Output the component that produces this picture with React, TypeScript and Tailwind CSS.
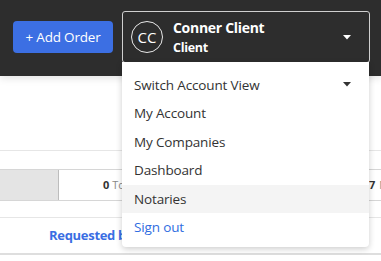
import React from 'react'

const menuItems = ['My Account', 'My Companies', 'Dashboard']

const Caret = () => (
  <svg width="8" height="5" viewBox="0 0 8 5" className="shrink-0">
    <path d="M0 0h8L4 4.5z" fill="currentColor" />
  </svg>
)

export default function App() {
  return (
    <div className="relative h-[261px] w-[381px] overflow-hidden bg-white font-['Open_Sans',sans-serif] text-[#333]">
      {/* top bar */}
      <header className="relative z-10 flex h-[76px] items-start gap-[9px] bg-[#2d2d2d] pl-[13px] shadow-[0_2px_8px_rgba(0,0,0,0.12)]">
        <button className="mt-[21px] h-[32px] w-[100px] rounded-[4px] bg-[#3c6fe3] text-[13.5px] tracking-[-0.2px] text-white">
          + Add Order
        </button>
        <div className="relative mt-[11px]">
          <div className="flex h-[52px] w-[248px] items-center rounded-[3px] border border-[#cfcfcf] pl-[8px] pr-[18px]">
            <div className="flex h-[32px] w-[32px] items-center justify-center rounded-full border border-[#e8e8e8] text-[15px] text-white">
              CC
            </div>
            <div className="ml-[10px] flex flex-1 flex-col pt-[1px]">
              <span className="text-[14px] font-bold leading-[20px] tracking-[-0.3px] text-white">Conner Client</span>
              <span className="text-[12.5px] font-bold leading-[20px] tracking-[-0.3px] text-white">Client</span>
            </div>
            <span className="text-white"><Caret /></span>
          </div>

          {/* account dropdown */}
          <div className="absolute left-0 top-[51px] w-[247px] rounded-b-[4px] bg-white pb-[5px] pt-[8.5px] text-[13.5px] tracking-[-0.15px] shadow-[0_2px_6px_rgba(0,0,0,0.2)]">
            <div className="flex h-[28.5px] items-center justify-between pl-[12px] pr-[18px]">
              Switch Account View
              <Caret />
            </div>
            {menuItems.map((t) => (
              <div key={t} className="flex h-[28.5px] items-center pl-[12px]">
                {t}
              </div>
            ))}
            <div className="flex h-[28.5px] items-center bg-[#f4f4f4] pl-[12px]">Notaries</div>
            <div className="flex h-[28.5px] items-center pl-[12px] text-[#2f6de1]">Sign out</div>
          </div>
        </div>
      </header>

      {/* page body behind menu */}
      <div className="mt-[74px] border-t border-[#e6e6e6]" />
      <div className="mt-[18px] flex h-[32px] border-y border-[#d6d6d6] text-[11px]">
        <div className="w-[59px] shrink-0 border-r border-[#bdbdbd] bg-[#e4e4e4]" />
        <div className="flex w-[310px] shrink-0 items-center pl-[44px]">
          <span className="font-bold text-[#333]">0</span>
          <span className="ml-[3px] text-[#888]">Total</span>
        </div>
        <div className="flex shrink-0 items-center">
          <span className="font-bold text-[#333]">7</span>
          <span className="ml-[4px] text-[#888]">Missing</span>
        </div>
      </div>
      <div className="mt-[16px] border-t border-[#e6e6e6]" />
      <div className="flex h-[35px] items-center pl-[49px] text-[13px] font-bold tracking-[-0.3px] text-[#3a6ee3]">
        Requested by
      </div>
      <div className="border-t-[2px] border-[#dedede]" />
    </div>
  )
}
